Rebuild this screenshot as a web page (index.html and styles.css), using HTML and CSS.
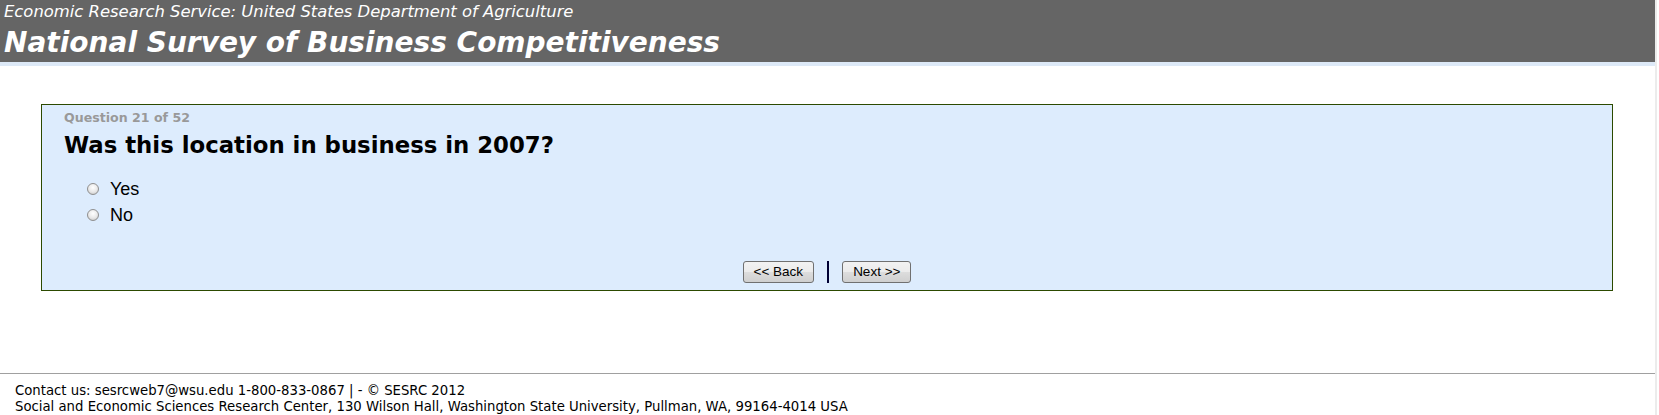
FILE: index.html
```html
<!DOCTYPE html>
<html lang="en">
  <head>
    <meta charset="UTF-8" />
    <title>National Survey of Business Competitiveness</title>
    <link rel="stylesheet" href="styles.css">
  </head>
  <body>
    <div class="page">
      <div class="header">
        <p class="agency">Economic Research Service: United States Department of Agriculture</p>
        <h1 class="survey-title">National Survey of Business Competitiveness</h1>
      </div>
      <div class="header-strip"></div>

      <div class="content">
        <form class="question-box">
          <p class="question-count">Question 21 of 52</p>
          <h2 class="question-text">Was this location in business in 2007?</h2>
          <ul class="answers">
            <li><label><span class="radio"></span>Yes</label></li>
            <li><label><span class="radio"></span>No</label></li>
          </ul>
          <div class="nav-buttons">
            <button type="button" class="nav-btn">&lt;&lt; Back</button>
            <span class="nav-sep"></span>
            <button type="button" class="nav-btn">Next &gt;&gt;</button>
          </div>
        </form>
      </div>

      <div class="footer">
        <p>Contact us: sesrcweb7@wsu.edu 1-800-833-0867 | - &copy; SESRC 2012</p>
        <p>Social and Economic Sciences Research Center, 130 Wilson Hall, Washington State University, Pullman, WA, 99164-4014 USA</p>
      </div>
    </div>
  </body>
</html>
```

FILE: styles.css
```css
* {
  margin: 0;
  padding: 0;
  box-sizing: border-box;
}

body {
  background-color: white;
  font-family: "DejaVu Sans", Verdana, sans-serif;
  overflow: hidden;
}

.page {
  width: 1657px;
  height: 415px;
  border-right: 2px solid #ececec;
  display: flex;
  flex-direction: column;
}

.header {
  background-color: #656565;
  color: white;
  height: 62px;
  padding-left: 4px;
}

.agency {
  font-size: 16.4px;
  font-style: italic;
  line-height: 22px;
  padding-top: 1px;
}

.survey-title {
  font-size: 28px;
  font-style: italic;
  font-weight: bold;
  line-height: 34px;
  padding-top: 3px;
}

.header-strip {
  height: 4px;
  background-color: #dde9f7;
}

.content {
  padding: 38px 42px 0 41px;
  height: 308px;
}

.question-box {
  background-color: #ddecfd;
  border: 1px solid #2c4a00;
  height: 187px;
  padding: 5px 22px 0 22px;
}

.question-count {
  color: #999999;
  font-size: 12.6px;
  font-weight: bold;
  line-height: 16px;
}

.question-text {
  font-size: 22.8px;
  font-weight: bold;
  line-height: 36px;
  margin-top: 1px;
}

.answers {
  list-style: none;
  margin-top: 13px;
  padding-left: 24px;
  font-family: "Liberation Sans", Arial, sans-serif;
  font-size: 18px;
  line-height: 26px;
}

.answers label {
  display: flex;
  align-items: center;
}

.radio {
  width: 12px;
  height: 12px;
  margin-left: -1px;
  border-radius: 50%;
  border: 1px solid #8f8f8f;
  background: radial-gradient(circle at 50% 35%, #ffffff 0%, #e8e8e8 55%, #bdbdbd 100%);
  margin-right: 11px;
}

.nav-buttons {
  display: flex;
  justify-content: center;
  align-items: center;
  gap: 13px;
  margin-top: 33px;
}

.nav-btn {
  font-family: "Liberation Sans", Arial, sans-serif;
  font-size: 13.5px;
  color: black;
  height: 22px;
  padding: 0 10px;
  border: 1px solid #707070;
  border-radius: 3px;
  background: linear-gradient(#f2f2f2 0%, #ebebeb 50%, #dddddd 51%, #cfcfcf 100%);
}

.nav-sep {
  width: 2px;
  height: 22px;
  background-color: #000033;
}

.footer {
  border-top: 1px solid #a0a0a0;
  padding: 9px 0 0 15px;
  font-family: "DejaVu Sans", Tahoma, sans-serif;
  font-size: 13.25px;
  line-height: 16px;
}
```
